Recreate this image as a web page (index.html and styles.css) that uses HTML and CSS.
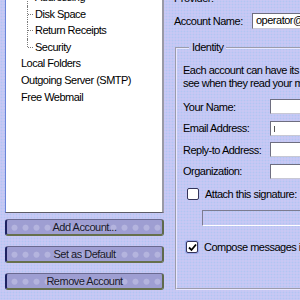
FILE: index.html
```html
<!DOCTYPE html>
<html lang="en">
<head>
  <meta charset="UTF-8">
  <title>Account Settings</title>
  <link rel="stylesheet" href="styles.css">
</head>
<body>
  <div class="window">

    <!-- Left: account tree + buttons -->
    <div class="sidebar">
      <div class="tree">
        <ul class="tree-list">
          <li class="child">Addressing</li>
          <li class="child">Disk Space</li>
          <li class="child">Return Receipts</li>
          <li class="child last">Security</li>
          <li>Local Folders</li>
          <li>Outgoing Server (SMTP)</li>
          <li>Free Webmail</li>
        </ul>
      </div>
      <div class="actions">
        <button class="skin-btn">Add Account...</button>
        <button class="skin-btn">Set as Default</button>
        <button class="skin-btn">Remove Account</button>
      </div>
    </div>

    <!-- Right: account settings page -->
    <div class="settings">
      <div class="provider">Provider:</div>
      <div class="account-row">
        <span class="account-label">Account Name:</span>
        <div class="textbox account-box">operator@freewebmail.com</div>
      </div>

      <fieldset class="group">
        <legend>Identity</legend>
        <p class="intro">Each account can have its own identity, which is the information that other people<br>see when they read your messages.</p>

        <div class="form-rows">
          <div class="form-row">
            <span class="form-label">Your Name:</span>
            <div class="textbox"></div>
          </div>
          <div class="form-row">
            <span class="form-label">Email Address:</span>
            <div class="textbox"><span class="caret"></span></div>
          </div>
          <div class="form-row">
            <span class="form-label">Reply-to Address:</span>
            <div class="textbox"></div>
          </div>
          <div class="form-row">
            <span class="form-label">Organization:</span>
            <div class="textbox"></div>
          </div>
        </div>

        <div class="check-row attach-row">
          <span class="checkbox"></span>
          <span>Attach this signature:</span>
        </div>
        <div class="file-box"></div>

        <div class="check-row compose-row">
          <span class="checkbox checked">
            <svg width="9" height="9" viewBox="0 0 9 9"><path d="M1 4.5 L3.5 7 L8 1.5" fill="none" stroke="#000" stroke-width="1.8"/></svg>
          </span>
          <span>Compose messages in HTML format</span>
        </div>
      </fieldset>
    </div>

  </div>
</body>
</html>
```

FILE: styles.css
```css
body {
  margin: 0;
  width: 300px;
  height: 300px;
  overflow: hidden;
  font-family: 'Liberation Sans', Arial, sans-serif;
  font-size: 11px;
  letter-spacing: -0.5px;
  color: #000;
  background: #c8c8f4 radial-gradient(#b2c6f2 0.8px, transparent 1.1px) 0 0 / 3px 3px;
}

.window {
  display: flex;
  padding-left: 5px;
  height: 300px;
}

/* ---- left column ---- */
.sidebar {
  width: 159px;
  flex-shrink: 0;
  display: flex;
  flex-direction: column;
}

.tree {
  height: 213px;
  box-sizing: border-box;
  background: #fff;
  border-left: 1px solid #6c84d8;
  border-right: 2px solid #9a9aa6;
  border-bottom: 1px solid #5c5c66;
  overflow: hidden;
}

.tree-list {
  list-style: none;
  margin: -11px 0 0;
  padding: 0;
}

.tree-list li {
  height: 16.6px;
  line-height: 16.6px;
  padding-left: 15px;
  white-space: nowrap;
  position: relative;
}

.tree-list li.child {
  padding-left: 29px;
}

/* dotted connectors */
.tree-list li.child::before {
  content: '';
  position: absolute;
  left: 21px;
  top: 0;
  bottom: 0;
  border-left: 1px dotted #7a7a7a;
}

.tree-list li.child.last::before {
  bottom: 50%;
}

.tree-list li.child::after {
  content: '';
  position: absolute;
  left: 22px;
  top: 50%;
  width: 5px;
  border-top: 1px dotted #7a7a7a;
}

.actions {
  display: flex;
  flex-direction: column;
  gap: 10px;
  margin-top: 6px;
}

.skin-btn {
  height: 17px;
  padding: 0;
  font: inherit;
  letter-spacing: inherit;
  color: #1a1a2a;
  border: 1px solid #6a6a90;
  border-left: 2px solid #1e2262;
  border-right: 2px solid #5e6a4c;
  border-bottom: 2px solid #66704c;
  border-radius: 3px;
  background: #9e9ed2 radial-gradient(circle at 50% 55%, #b4b4de 2.5px, transparent 3.5px) 2px 0 / 11px 14px;
}

/* ---- right column ---- */
.settings {
  flex: 1;
  min-width: 0;
  padding-left: 10px;
  white-space: nowrap;
}

.provider {
  height: 13px;
  line-height: 13px;
  margin-top: -8px;
}

.account-row {
  display: flex;
  align-items: center;
  margin-top: 8px;
  height: 16px;
}

.account-label {
  width: 78px;
  flex-shrink: 0;
}

.textbox {
  flex: 1;
  height: 15px;
  box-sizing: border-box;
  background: #fff;
  border: 1px solid #6e6e80;
  border-right-color: #c8c8d4;
  border-bottom-color: #c8c8d4;
  padding-left: 3px;
  line-height: 13px;
  overflow: hidden;
  margin-right: -20px;
}

.account-box {
  height: 16px;
}

.caret {
  display: inline-block;
  width: 1px;
  height: 6px;
  background: #555;
  vertical-align: middle;
}

.group {
  margin: 12px -30px 0 1px;
  padding: 0 0 0 6px;
  height: 249px;
  box-sizing: border-box;
  border: 2px groove #e8e8ff;
}

.group legend {
  padding: 0 3px;
  margin-left: 6px;
  line-height: 13px;
}

.intro {
  margin: 10px 0 0;
  line-height: 12.5px;
}

.form-rows {
  display: flex;
  flex-direction: column;
  gap: 6.5px;
  margin-top: 10px;
}

.form-row {
  display: flex;
  align-items: center;
  height: 15px;
}

.form-label {
  width: 87px;
  flex-shrink: 0;
}

.check-row {
  display: flex;
  align-items: center;
  gap: 6px;
  height: 13px;
}

.attach-row {
  margin: 9px 0 0 4px;
}

.compose-row {
  margin: 15px 0 0 3px;
}

.checkbox {
  width: 12px;
  height: 12px;
  box-sizing: border-box;
  background: #fff;
  border: 1px solid #34345a;
  border-radius: 2px;
  display: flex;
  align-items: center;
  justify-content: center;
}

.checkbox.checked {
  box-shadow: 0 0 0 1px #9aa8e8;
}

.file-box {
  height: 16px;
  box-sizing: border-box;
  margin: 9px -20px 0 19px;
  border: 1px solid #7c7c90;
  border-right-color: #fff;
  border-bottom-color: #fff;
}
```
